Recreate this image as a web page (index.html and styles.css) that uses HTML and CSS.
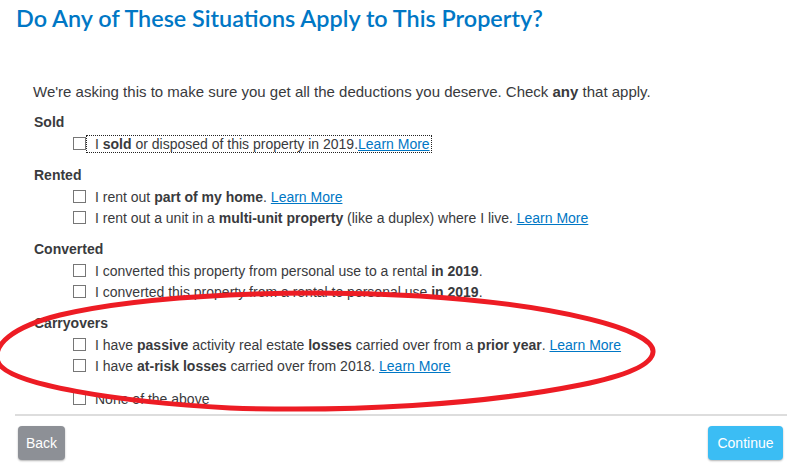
FILE: index.html
```html
<html>
<head>
  <title>Property Situations</title>
  <link rel="stylesheet" href="styles.css">
</head>
<body>
  <h1 class="page-title">Do Any of These Situations Apply to This Property?</h1>

  <div class="question">
    <p class="intro">We're asking this to make sure you get all the deductions you deserve. Check <b>any</b> that apply.</p>

    <div class="group">
      <div class="group-title">Sold</div>
      <label class="option"><span class="box"></span><span class="label-text focused">I <b>sold</b> or disposed of this property in 2019.<a href="#">Learn More</a></span></label>
    </div>

    <div class="group">
      <div class="group-title">Rented</div>
      <label class="option"><span class="box"></span><span class="label-text">I rent out <b>part of my home</b>. <a href="#">Learn More</a></span></label>
      <label class="option"><span class="box"></span><span class="label-text">I rent out a unit in a <b>multi-unit property</b> (like a duplex) where I live. <a href="#">Learn More</a></span></label>
    </div>

    <div class="group">
      <div class="group-title">Converted</div>
      <label class="option"><span class="box"></span><span class="label-text">I converted this property from personal use to a rental <b>in 2019</b>.</span></label>
      <label class="option"><span class="box"></span><span class="label-text">I converted this property from a rental to personal use <b>in 2019</b>.</span></label>
    </div>

    <div class="group">
      <div class="group-title">Carryovers</div>
      <label class="option"><span class="box"></span><span class="label-text">I have <b>passive</b> activity real estate <b>losses</b> carried over from a <b>prior year</b>. <a href="#">Learn More</a></span></label>
      <label class="option"><span class="box"></span><span class="label-text">I have <b>at-risk losses</b> carried over from 2018. <a href="#">Learn More</a></span></label>
    </div>

    <div class="group last">
      <label class="option"><span class="box"></span><span class="label-text">None of the above</span></label>
    </div>
  </div>

  <div class="footer">
    <div class="footer-bar">
      <button class="btn btn-back">Back</button>
      <button class="btn btn-continue">Continue</button>
    </div>
  </div>

  <!-- hand drawn annotation -->
  <svg class="scribble" width="793" height="469" viewBox="0 0 793 469">
    <path d="M653 352 C655 330 560 305 420 296 C300 289 150 294 60 315 C12 327 -8 345 -2 362 C8 385 120 402 230 408 C350 412 480 405 580 385 C625 376 652 365 653 352 Z"
          fill="none" stroke="#ed1c24" stroke-width="5"/>
  </svg>
</body>
</html>
```

FILE: styles.css
```css
body {
  margin: 0;
  position: relative;
  width: 793px;
  height: 469px;
  overflow: hidden;
  background: #ffffff;
  font-family: "Liberation Sans", Arial, sans-serif;
  font-size: 14px;
  color: #393a3d;
}

.page-title {
  margin: 0;
  padding: 4px 16px 0;
  font-family: Lato, "Open Sans", sans-serif;
  font-weight: 600;
  font-size: 23.4px;
  line-height: 28px;
  color: #0077c5;
}

.question {
  padding-left: 33px;
}

.intro {
  margin: 49px 0 10px;
  font-size: 15px;
  line-height: 21px;
}

.group {
  margin-bottom: 11px;
}

.group.last {
  margin-bottom: 0;
  padding-top: 1px;
}

.group-title {
  font-weight: bold;
  line-height: 21px;
  padding-left: 1px;
}

.option {
  display: flex;
  align-items: center;
  height: 21px;
  padding-left: 40px;
}

.box {
  width: 11px;
  height: 11px;
  border: 1px solid #767676;
  background: #fff;
  flex-shrink: 0;
}

.label-text {
  padding: 0 1px 0 8px;
  margin-left: 1px;
  line-height: 16px;
}

.label-text.focused {
  outline: 1px dotted #222;
}

a {
  color: #0077c5;
}

.footer {
  padding: 5px 6px 0 15px;
}

.footer-bar {
  display: flex;
  justify-content: space-between;
  border-top: 2px solid #dddddd;
  padding: 10px 4px 0 3px;
}

.btn {
  height: 34px;
  border: none;
  border-radius: 4px;
  color: #ffffff;
  font-family: "Liberation Sans", Arial, sans-serif;
  font-size: 14px;
  box-shadow: 0 1px 2px rgba(0, 0, 0, 0.3);
}

.btn-back {
  width: 47px;
  background: #8d9096;
}

.btn-continue {
  width: 75px;
  background: #3bbdf4;
}

.scribble {
  position: absolute;
  top: 0;
  left: 0;
  pointer-events: none;
}
```
